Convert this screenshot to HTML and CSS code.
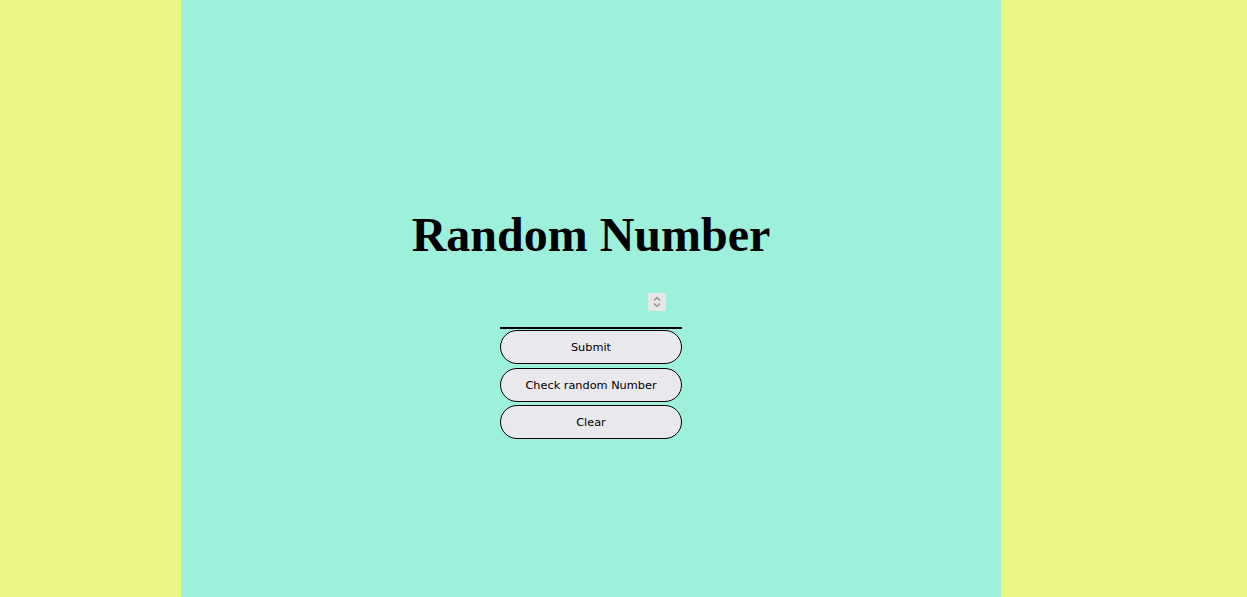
FILE: index.html
```html
<!DOCTYPE html>
<html>
<head>
<meta charset="utf-8">
<link rel="stylesheet" href="styles.css">
</head>
<body>
<main class="page">
  <h1 class="title">Random Number</h1>
  <div class="field">
    <input class="num" type="number">
    <span class="spin" aria-hidden="true">
      <svg width="18" height="18" viewBox="0 0 18 18">
        <path d="M6 7.5 L9 4.5 L12 7.5" fill="none" stroke="#8a8a8a" stroke-width="1.2"/>
        <path d="M6 10.5 L9 13.5 L12 10.5" fill="none" stroke="#8a8a8a" stroke-width="1.2"/>
      </svg>
    </span>
  </div>
  <div class="buttons">
    <button class="btn">Submit</button>
    <button class="btn">Check random Number</button>
    <button class="btn">Clear</button>
  </div>
</main>
</body>
</html>
```
FILE: styles.css
```css
html, body {
  margin: 0;
  padding: 0;
  background: #ecf482;
  height: 100%;
}
.page {
  margin-left: 181px;
  width: 820px;
  min-height: 100vh;
  box-sizing: border-box;
  background: #9cf0dc;
  display: flex;
  flex-direction: column;
  align-items: center;
  padding-top: 207px;
}
.title {
  margin: 0 0 15px;
  font-family: "Liberation Serif", "Times New Roman", serif;
  font-weight: bold;
  font-size: 48px;
  line-height: 55px;
  color: #000;
}
.field {
  position: relative;
  width: 182px;
  height: 52px;
}
.num {
  width: 182px;
  height: 52px;
  box-sizing: border-box;
  padding: 15px 16px 15px 2px;
  border: none;
  border-bottom: 2px solid #000;
  background: transparent;
  outline: none;
  font-family: "DejaVu Sans", sans-serif;
  font-size: 13px;
  -moz-appearance: textfield;
}
.num::-webkit-inner-spin-button,
.num::-webkit-outer-spin-button {
  -webkit-appearance: none;
  margin: 0;
}
.spin {
  position: absolute;
  right: 16px;
  top: 16px;
  width: 18px;
  height: 18px;
  background: #e6e6e6;
  display: block;
}
.spin svg {
  display: block;
}
.buttons {
  display: flex;
  flex-direction: column;
  gap: 3.5px;
  margin-top: 1px;
}
.btn {
  width: 182px;
  height: 34px;
  border: 1px solid #000;
  border-radius: 17px;
  background: #e9e8ed;
  color: #000;
  font-family: "DejaVu Sans", Verdana, sans-serif;
  font-size: 11.3px;
  padding: 1px 0 0;
}
```
